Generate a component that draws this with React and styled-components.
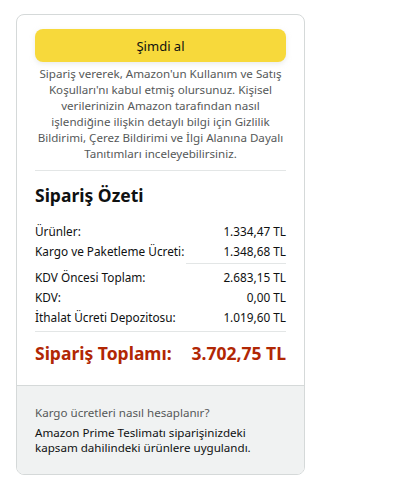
import React from "react";
import styled, { createGlobalStyle } from "styled-components";

const Global = createGlobalStyle`
  html, body { margin: 0; padding: 0; background: #fff; }
  body { font-family: "Noto Sans", "Liberation Sans", Arial, sans-serif; color: #0f1111; }
`;

const Page = styled.div`
  padding: 14px 100px 26px 16px;
  width: 405px;
  box-sizing: border-box;
`;

const Card = styled.div`
  width: 289px;
  box-sizing: border-box;
  border: 1px solid #d5d9d9;
  border-radius: 8px;
  overflow: hidden;
  background: #fff;
`;

const Main = styled.div`
  padding: 14px 18px 20px;
  display: flex;
  flex-direction: column;
`;

const BuyButton = styled.button`
  height: 33px;
  width: 100%;
  border: none;
  border-radius: 8px;
  background: #f7d93b;
  box-shadow: 0 2px 5px rgba(213, 217, 217, 0.5);
  font-family: inherit;
  font-size: 13px;
  color: #0f1111;
  cursor: pointer;
`;

const Legal = styled.p`
  margin: 4px 0 0;
  font-size: 11.6px;
  line-height: 16px;
  color: #565959;
  text-align: center;
  white-space: nowrap;
`;

const Divider = styled.hr`
  border: none;
  border-top: 1px solid #e3e6e6;
  margin: ${(p) => p.$m || "8px 0 0"};
  width: ${(p) => p.$w || "100%"};
  align-self: flex-end;
`;

const Heading = styled.h2`
  margin: 12px 0 14px;
  font-size: 17.5px;
  line-height: 24px;
  font-weight: 700;
  color: #0f1111;
`;

const Row = styled.div`
  display: flex;
  justify-content: space-between;
  font-size: 11.8px;
  line-height: 20px;
  color: #0f1111;
`;

const TotalRow = styled.div`
  display: flex;
  justify-content: space-between;
  margin-top: 9px;
  font-size: 17.5px;
  line-height: 24px;
  font-weight: 700;
  color: #b12704;
`;

const Footer = styled.div`
  background: #f0f2f2;
  border-top: 1px solid #d5d9d9;
  padding: 19px 18px 19px;
`;

const FootQuestion = styled.div`
  font-size: 11.6px;
  line-height: 16px;
  color: #565959;
  margin-bottom: 4px;
`;

const FootText = styled.div`
  font-size: 11.6px;
  line-height: 15px;
  color: #0f1111;
`;

export default function App() {
  return (
    <Page>
      <Global />
      <Card>
        <Main>
          <BuyButton>Şimdi al</BuyButton>
          <Legal>
            Sipariş vererek, Amazon'un Kullanım ve Satış
            <br />
            Koşulları'nı kabul etmiş olursunuz. Kişisel
            <br />
            verilerinizin Amazon tarafından nasıl
            <br />
            işlendiğine ilişkin detaylı bilgi için Gizlilik
            <br />
            Bildirimi, Çerez Bildirimi ve İlgi Alanına Dayalı
            <br />
            Tanıtımları inceleyebilirsiniz.
          </Legal>
          <Divider />
          <Heading>Sipariş Özeti</Heading>
          <Row><span>Ürünler:</span><span>1.334,47 TL</span></Row>
          <Row><span>Kargo ve Paketleme Ücreti:</span><span>1.348,68 TL</span></Row>
          <Divider $w="100px" $m="2px 0 3px" />
          <Row><span>KDV Öncesi Toplam:</span><span>2.683,15 TL</span></Row>
          <Row><span>KDV:</span><span>0,00 TL</span></Row>
          <Row><span>İthalat Ücreti Depozitosu:</span><span>1.019,60 TL</span></Row>
          <Divider $m="4px 0 0" />
          <TotalRow><span>Sipariş Toplamı:</span><span>3.702,75 TL</span></TotalRow>
        </Main>
        <Footer>
          <FootQuestion>Kargo ücretleri nasıl hesaplanır?</FootQuestion>
          <FootText>
            Amazon Prime Teslimatı siparişinizdeki
            <br />
            kapsam dahilindeki ürünlere uygulandı.
          </FootText>
        </Footer>
      </Card>
    </Page>
  );
}
